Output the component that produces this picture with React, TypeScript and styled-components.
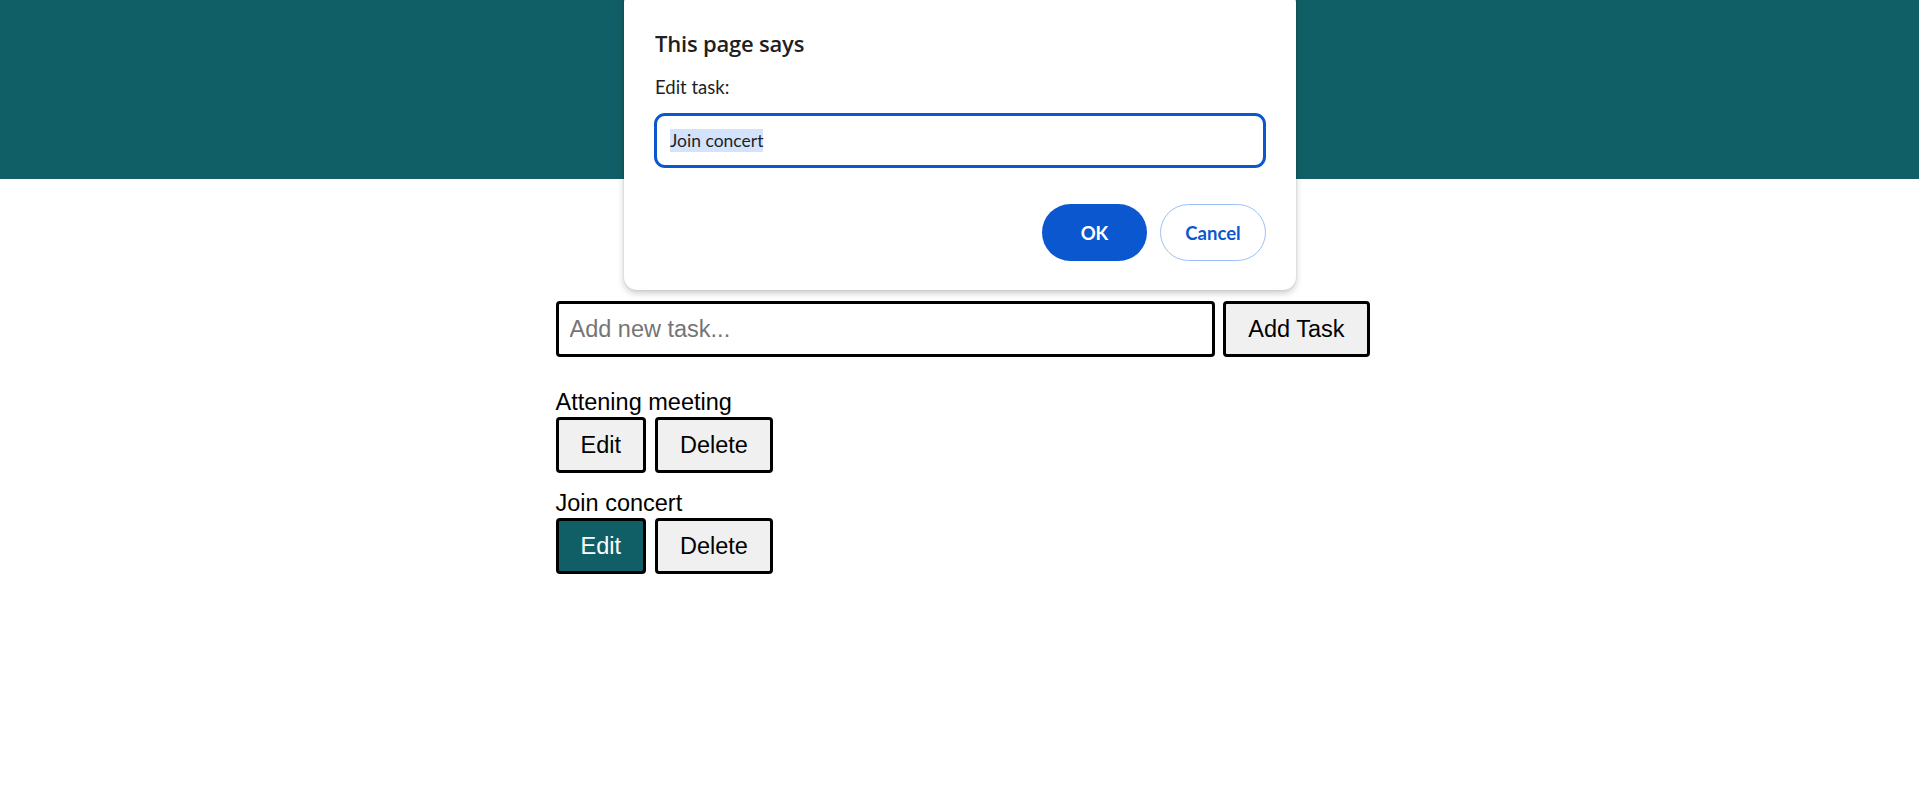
import React from "react";
import styled, { createGlobalStyle } from "styled-components";

const GlobalStyle = createGlobalStyle`
  html, body {
    margin: 0;
    padding: 0;
    background: #ffffff;
  }
  body {
    font-family: "Liberation Sans", Arial, sans-serif;
    color: #000;
  }
`;

const TEAL = "#115f66";
const CHROME_BLUE = "#0b57d0";

const Page = styled.div`
  position: relative;
  min-height: 811px;
  overflow: hidden;
`;

const Header = styled.header`
  height: 179px;
  background-color: ${TEAL};
`;

const Main = styled.main`
  display: flex;
  justify-content: center;
  padding: 122px 0 0 6px;
`;

const Container = styled.div`
  width: 814px;
  display: flex;
  flex-direction: column;
`;

const AddRow = styled.form`
  display: flex;
  gap: 8px;
  margin: 0 0 32px;
`;

const TaskInput = styled.input`
  flex: 1;
  min-width: 0;
  height: 56px;
  box-sizing: border-box;
  border: 3px solid #000;
  border-radius: 4px;
  padding: 0 11px;
  font-family: "Liberation Sans", Arial, sans-serif;
  font-size: 23.5px;
  outline: none;
  &::placeholder {
    color: #757575;
  }
`;

const Button = styled.button<{ $active?: boolean }>`
  height: 56px;
  box-sizing: border-box;
  padding: 0 22px;
  border: 3px solid #000;
  border-radius: 4px;
  background-color: ${(p) => (p.$active ? TEAL : "#f0f0f0")};
  color: ${(p) => (p.$active ? "#fff" : "#000")};
  font-family: "Liberation Sans", Arial, sans-serif;
  font-size: 23.5px;
  cursor: pointer;
`;

const TaskList = styled.ul`
  list-style: none;
  margin: 0;
  padding: 0;
  display: flex;
  flex-direction: column;
  gap: 17px;
`;

const TaskItem = styled.li`
  display: flex;
  flex-direction: column;
  align-items: flex-start;
`;

const TaskText = styled.span`
  font-size: 23.5px;
  line-height: 26px;
`;

const TaskActions = styled.div`
  display: flex;
  gap: 9px;
  margin-top: 2px;
`;

/* native prompt() dialog drawn over the page */
const Dialog = styled.div`
  position: absolute;
  left: 624px;
  top: -10px;
  width: 672px;
  box-sizing: border-box;
  padding: 39px 30px 29px;
  background: #fff;
  border-radius: 13px;
  box-shadow: 0 3px 7px rgba(0, 0, 0, 0.22), 0 0 2px rgba(0, 0, 0, 0.12);
  font-family: Lato, "Open Sans", sans-serif;
  display: flex;
  flex-direction: column;
`;

const DialogTitle = styled.div`
  font-family: "Open Sans", Lato, sans-serif;
  font-size: 22px;
  line-height: 28px;
  font-weight: 600;
  color: #1f1f1f;
  padding-left: 1px;
  letter-spacing: -0.2px;
`;

const DialogLabel = styled.div`
  margin-top: 19px;
  font-size: 18.5px;
  line-height: 22px;
  color: #1f1f1f;
  padding-left: 1px;
`;

const PromptField = styled.div`
  margin-top: 15px;
  height: 55px;
  box-sizing: border-box;
  border: 3px solid ${CHROME_BLUE};
  border-radius: 11px;
  padding: 0 13px;
  display: flex;
  align-items: center;
  font-size: 17.5px;
  color: #1f1f1f;
`;

const Selected = styled.span`
  background: #d3e3fd;
  line-height: 23px;
`;

const DialogButtons = styled.div`
  margin-top: 36px;
  display: flex;
  justify-content: flex-end;
  gap: 13px;
`;

const PillButton = styled.button<{ $primary?: boolean }>`
  height: 57px;
  width: ${(p) => (p.$primary ? "105px" : "106px")};
  box-sizing: border-box;
  border-radius: 29px;
  border: ${(p) => (p.$primary ? "none" : "1.5px solid #9ec0f8")};
  background: ${(p) => (p.$primary ? CHROME_BLUE : "#fff")};
  color: ${(p) => (p.$primary ? "#fff" : CHROME_BLUE)};
  font-family: Lato, "Open Sans", sans-serif;
  font-size: 18.5px;
  font-weight: 700;
  cursor: pointer;
`;

const tasks = [
  { id: 1, text: "Attening meeting", editing: false },
  { id: 2, text: "Join concert", editing: true },
];

export default function App() {
  return (
    <Page>
      <GlobalStyle />
      <Header />
      <Main>
        <Container>
          <AddRow onSubmit={(e) => e.preventDefault()}>
            <TaskInput placeholder="Add new task..." />
            <Button type="submit">Add Task</Button>
          </AddRow>
          <TaskList>
            {tasks.map((task) => (
              <TaskItem key={task.id}>
                <TaskText>{task.text}</TaskText>
                <TaskActions>
                  <Button $active={task.editing}>Edit</Button>
                  <Button>Delete</Button>
                </TaskActions>
              </TaskItem>
            ))}
          </TaskList>
        </Container>
      </Main>
      <Dialog role="dialog">
        <DialogTitle>This page says</DialogTitle>
        <DialogLabel>Edit task:</DialogLabel>
        <PromptField>
          <Selected>Join concert</Selected>
        </PromptField>
        <DialogButtons>
          <PillButton $primary>OK</PillButton>
          <PillButton>Cancel</PillButton>
        </DialogButtons>
      </Dialog>
    </Page>
  );
}
